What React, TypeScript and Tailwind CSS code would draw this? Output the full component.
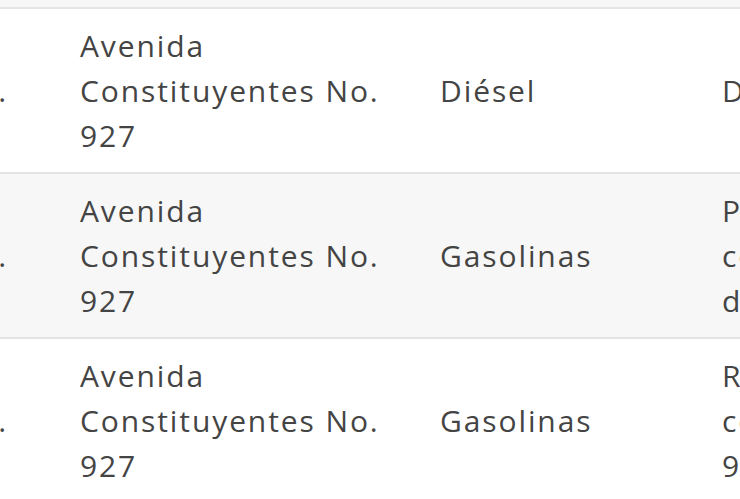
const rows = [
  {
    name: "S.A. de C.V.",
    address: "Avenida Constituyentes No. 927",
    product: "Diésel",
    detail: ["Diésel automotriz"],
    striped: false,
  },
  {
    name: "S.A. de C.V.",
    address: "Avenida Constituyentes No. 927",
    product: "Gasolinas",
    detail: ["Premium con un", "contenido mínimo", "de 92 octanos"],
    striped: true,
  },
  {
    name: "S.A. de C.V.",
    address: "Avenida Constituyentes No. 927",
    product: "Gasolinas",
    detail: ["Regular con un", "contenido menor a", "92 octanos"],
    striped: false,
  },
];

function Row({ row }: { row: (typeof rows)[number] }) {
  return (
    <div
      className={`grid grid-cols-[65px_360px_282px_300px] border-t-2 border-[#e4e4e4] ${
        row.striped ? "bg-[#f7f7f7]" : "bg-white"
      }`}
    >
      <div className="flex items-center justify-end py-[14px] pr-[57px] whitespace-nowrap">
        {row.name}
      </div>
      <div className="flex items-center px-[15px] py-[14px]">{row.address}</div>
      <div className="flex items-center px-[15px] py-[14px]">{row.product}</div>
      <div className="flex flex-col justify-center px-[15px] py-[14px] whitespace-nowrap">
        {row.detail.map((line) => (
          <span key={line}>{line}</span>
        ))}
      </div>
    </div>
  );
}

export default function App() {
  return (
    <div
      className="w-[740px] h-[499px] overflow-hidden bg-white text-[30px] leading-[45px] tracking-[1.9px] text-[#444444]"
      style={{ fontFamily: '"Open Sans", "Liberation Sans", sans-serif' }}
    >
      <div className="h-[7px] bg-[#f7f7f7]" />
      {rows.map((row, i) => (
        <Row key={i} row={row} />
      ))}
    </div>
  );
}
